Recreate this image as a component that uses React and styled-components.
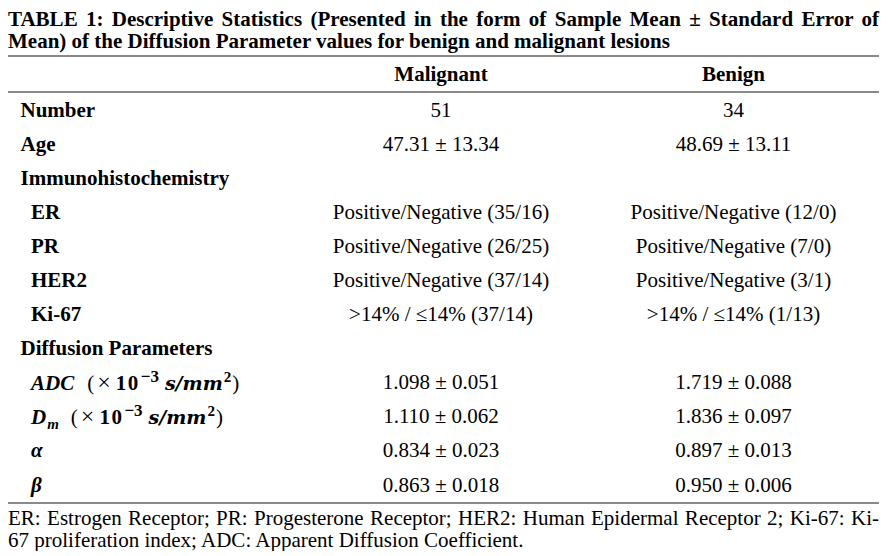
import React from 'react';
import styled, { createGlobalStyle } from 'styled-components';

const GlobalStyle = createGlobalStyle`
  html, body {
    margin: 0;
    padding: 0;
    background: #ffffff;
  }
  body {
    font-family: "Liberation Serif", "Times New Roman", serif;
    color: #000;
  }
`;

const Page = styled.div`
  width: 871px;
  padding: 8px 10px 0 8px;
  font-size: 21px;
`;

const Caption = styled.div`
  font-weight: bold;
  line-height: 22px;
  text-align: justify;
  padding-bottom: 3px;
  border-bottom: 2px solid #8a8a8a;
`;

const JustLine = styled.span`
  display: block;
  text-align: justify;
  text-align-last: ${(p) => (p.$full ? 'justify' : 'left')};
`;

const Grid = styled.div`
  display: grid;
  grid-template-columns: 286px 294px 291px;
`;

const HeadRow = styled(Grid)`
  height: 33px;
  padding-top: 1px;
  border-bottom: 2px solid #8a8a8a;
  align-items: center;
  font-weight: bold;
`;

const Body = styled.div`
  border-bottom: 2px solid #8a8a8a;
`;

const Row = styled(Grid)`
  height: 34.1px;
  align-items: center;
`;

const Label = styled.div`
  font-weight: bold;
  padding-left: ${(p) => (p.$sub ? '23px' : '12.5px')};
  white-space: nowrap;
`;

const Cell = styled.div`
  text-align: center;
  white-space: nowrap;
`;

const Math = styled.span`
  font-weight: bold;
  font-style: italic;
`;

const Up = styled.span`
  font-style: normal;
  font-weight: ${(p) => (p.$bold ? 'bold' : 'normal')};
  margin-left: ${(p) => p.$ml || 0};
`;

const Times = styled(Up)`
  font-size: 24px;
  margin-left: 3px;
`;

const Ten = styled(Up)`
  font-weight: bold;
  letter-spacing: 1.5px;
`;

const Unit2 = styled.span`
  font-family: "DejaVu Serif", "Liberation Serif", serif;
  font-weight: bold;
  font-style: italic;
  font-size: 19px;
  margin-left: 6px;
`;

const Sup = styled.sup`
  font-size: ${(p) => p.$size || '17px'};
  font-weight: bold;
  font-style: normal;
  line-height: 0;
  vertical-align: 8px;
  margin-left: 1px;
`;

const Sub = styled.sub`
  font-size: 15px;
  line-height: 0;
  vertical-align: -5px;
  margin-left: 1px;
`;

const Note = styled.div`
  padding-top: 3px;
  line-height: 22px;
`;

const Unit = ({ gap }) => (
  <>
    <Up $ml={gap}>(</Up>
    <Times>×</Times>
    <Ten $ml="5px">10</Ten>
    <Sup>−3</Sup>
    <Unit2>s/mm</Unit2>
    <Sup $size="15px">2</Sup>
    <Up $ml="1px">)</Up>
  </>
);

const rows = [
  { label: 'Number', m: '51', b: '34' },
  { label: 'Age', m: '47.31 ± 13.34', b: '48.69 ± 13.11' },
  { label: 'Immunohistochemistry' },
  { label: 'ER', sub: true, m: 'Positive/Negative (35/16)', b: 'Positive/Negative (12/0)' },
  { label: 'PR', sub: true, m: 'Positive/Negative (26/25)', b: 'Positive/Negative (7/0)' },
  { label: 'HER2', sub: true, m: 'Positive/Negative (37/14)', b: 'Positive/Negative (3/1)' },
  { label: 'Ki-67', sub: true, m: '>14% / ≤14% (37/14)', b: '>14% / ≤14% (1/13)' },
  { label: 'Diffusion Parameters' },
  {
    label: (
      <>
        <Math>ADC</Math>
        <Unit gap="13px" />
      </>
    ),
    sub: true,
    m: '1.098 ± 0.051',
    b: '1.719 ± 0.088',
  },
  {
    label: (
      <>
        <Math>D</Math>
        <Sub>
          <Math>m</Math>
        </Sub>
        <Unit gap="12px" />
      </>
    ),
    sub: true,
    m: '1.110 ± 0.062',
    b: '1.836 ± 0.097',
  },
  { label: <Math>α</Math>, sub: true, m: '0.834 ± 0.023', b: '0.897 ± 0.013' },
  { label: <Math>β</Math>, sub: true, m: '0.863 ± 0.018', b: '0.950 ± 0.006' },
];

const App = () => {
  return (
    <Page>
      <GlobalStyle />
      <Caption>
        <JustLine $full>
          TABLE 1: Descriptive Statistics (Presented in the form of Sample Mean ± Standard Error of
        </JustLine>
        <JustLine>Mean) of the Diffusion Parameter values for benign and malignant lesions</JustLine>
      </Caption>

      <HeadRow>
        <div />
        <Cell>Malignant</Cell>
        <Cell>Benign</Cell>
      </HeadRow>

      <Body>
        {rows.map((r, i) => (
          <Row key={i}>
            <Label $sub={r.sub}>{r.label}</Label>
            <Cell>{r.m}</Cell>
            <Cell>{r.b}</Cell>
          </Row>
        ))}
      </Body>

      <Note>
        <JustLine $full>
          ER: Estrogen Receptor; PR: Progesterone Receptor; HER2: Human Epidermal Receptor 2; Ki-67: Ki-
        </JustLine>
        <JustLine>67 proliferation index; ADC: Apparent Diffusion Coefficient.</JustLine>
      </Note>
    </Page>
  );
};

export default App;
